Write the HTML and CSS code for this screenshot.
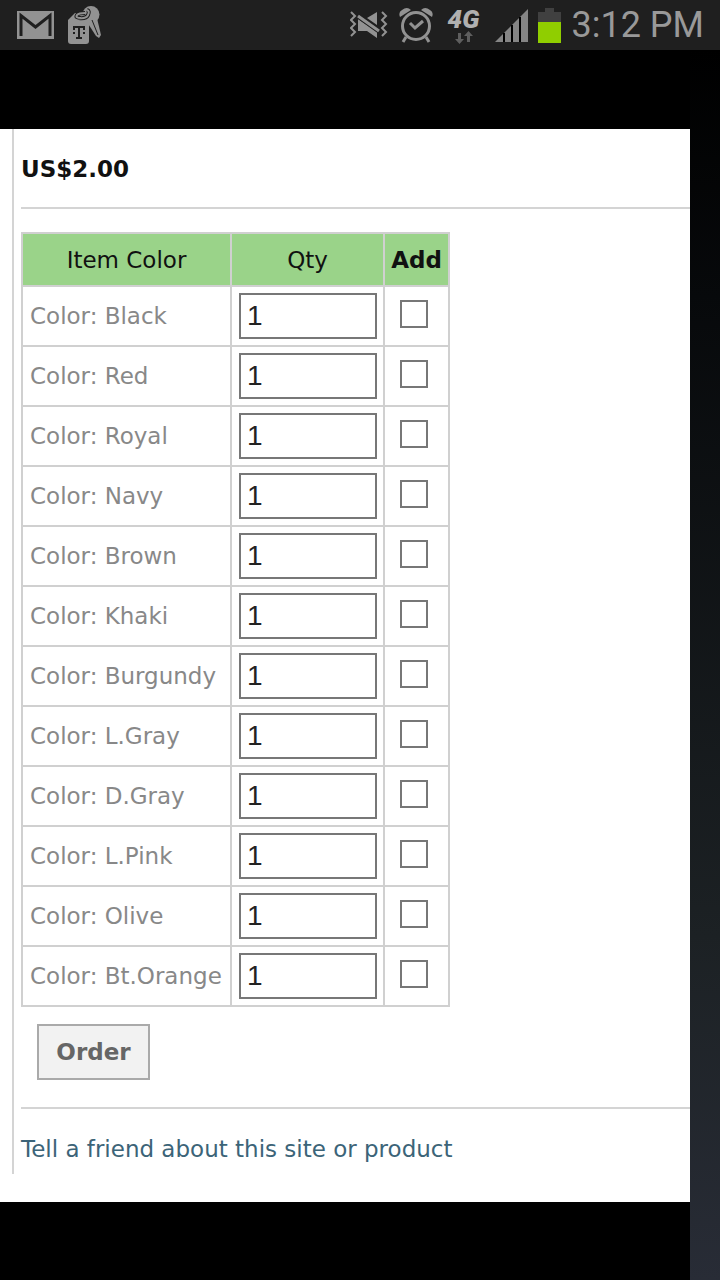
FILE: index.html
```html
<!DOCTYPE html>
<html lang="en">
<head>
  <meta charset="UTF-8">
  <meta name="viewport" content="width=device-width, initial-scale=1.0">
  <title>Order</title>
  <link rel="stylesheet" href="styles.css">
</head>
<body>
  <header class="status-bar">
    <div class="notifications">
      <svg width="38" height="28" viewBox="0 0 38 28">
        <rect x="1" y="0" width="37" height="28" fill="#929292"/>
        <path d="M5 25V4.500L19.500 16 34 4.500V25" fill="none" stroke="#1f1f1f" stroke-width="3"/>
      </svg>
      <svg width="34" height="38" viewBox="0 0 34 38">
        <path d="M17 13L28 8 33 29 31 32 28 30Z" fill="#929292"/>
        <circle cx="23" cy="8.500" r="8.500" fill="#929292"/>
        <path d="M24 14L30 29" stroke="#1f1f1f" stroke-width="1"/>
        <path d="M7 7H15L21 13V35Q21 38 18 38H3Q0 38 0 35V14Z" fill="#929292"/>
        <path d="M13 12Q7 12 9 9Q11 7 17 7M11 12Q18 13 20 9Q22 5 19 4" fill="none" stroke="#1f1f1f" stroke-width="4"/>
        <path d="M13 12Q7 12 9 9Q11 7 17 7M11 12Q18 13 20 9Q22 5 19 4" fill="none" stroke="#929292" stroke-width="2"/>
        <path d="M6 24V21H16V24M11 21V32M8 32H14M5 27H7M15 27H17" fill="none" stroke="#1f1f1f" stroke-width="2"/>
      </svg>
    </div>
    <div class="indicators">
      <!-- vibrate / muted -->
      <svg width="38" height="28" viewBox="0 0 38 28">
        <path d="M1 1L5 5 1 9 5 13 1 17 5 21 1 25M32 1L36 5 32 9 36 13 32 17 36 21 32 25" fill="none" stroke="#929292" stroke-width="2"/>
        <path d="M8 8L27 21V27L17 20H8ZM17 7L27 1V14Z" fill="#929292"/>
        <path d="M8 5L29 20" stroke="#1f1f1f" stroke-width="5"/>
        <path d="M8 5L29 20" stroke="#929292" stroke-width="3"/>
      </svg>
      <!-- alarm -->
      <svg class="alarm" width="34" height="36" viewBox="0 0 34 36">
        <circle cx="17" cy="19" r="13.500" fill="none" stroke="#929292" stroke-width="3"/>
        <path d="M1 10Q-1 5 3 3Q8 -1 12 3ZM33 10Q35 5 31 3Q26 -1 22 3Z" fill="#929292"/>
        <path d="M11 16L16 21 24 14" fill="none" stroke="#929292" stroke-width="3"/>
        <path d="M7 30L4 35M27 30L30 35" stroke="#929292" stroke-width="3"/>
      </svg>
      <div class="network">
        <span>4G</span>
        <svg width="18" height="13" viewBox="0 0 18 13">
          <path d="M3 2H6V8H9L4.500 13 0 8H3ZM12 11H15V5H18L13.500 0 9 5H12Z" fill="#5e5e5e"/>
        </svg>
      </div>
      <svg class="signal" width="33" height="33" viewBox="0 0 33 33">
        <path d="M0 33L33 0V33Z" fill="#858585"/>
        <path d="M9 24V33M17 16V33M25 8V33" stroke="#000" stroke-width="2"/>
      </svg>
      <svg width="23" height="35" viewBox="0 0 23 35">
        <path d="M7 0H16V4H23V14H0V4H7Z" fill="#404040"/>
        <rect y="14" width="23" height="21" fill="#90ce00"/>
      </svg>
      <time class="clock">3:12 PM</time>
    </div>
  </header>

  <div class="screen">
    <main class="page">
      <div class="product">
        <p class="price">US$2.00</p>
        <form class="order-form">
          <table class="colors">
            <thead>
              <tr><th class="col-color">Item Color</th><th class="col-qty">Qty</th><th class="col-add">Add</th></tr>
            </thead>
            <tbody>
              <tr><td>Color: Black</td><td><input type="text" value="1" aria-label="Quantity, Black"></td><td><input type="checkbox" aria-label="Add Black"></td></tr>
              <tr><td>Color: Red</td><td><input type="text" value="1" aria-label="Quantity, Red"></td><td><input type="checkbox" aria-label="Add Red"></td></tr>
              <tr><td>Color: Royal</td><td><input type="text" value="1" aria-label="Quantity, Royal"></td><td><input type="checkbox" aria-label="Add Royal"></td></tr>
              <tr><td>Color: Navy</td><td><input type="text" value="1" aria-label="Quantity, Navy"></td><td><input type="checkbox" aria-label="Add Navy"></td></tr>
              <tr><td>Color: Brown</td><td><input type="text" value="1" aria-label="Quantity, Brown"></td><td><input type="checkbox" aria-label="Add Brown"></td></tr>
              <tr><td>Color: Khaki</td><td><input type="text" value="1" aria-label="Quantity, Khaki"></td><td><input type="checkbox" aria-label="Add Khaki"></td></tr>
              <tr><td>Color: Burgundy</td><td><input type="text" value="1" aria-label="Quantity, Burgundy"></td><td><input type="checkbox" aria-label="Add Burgundy"></td></tr>
              <tr><td>Color: L.Gray</td><td><input type="text" value="1" aria-label="Quantity, L.Gray"></td><td><input type="checkbox" aria-label="Add L.Gray"></td></tr>
              <tr><td>Color: D.Gray</td><td><input type="text" value="1" aria-label="Quantity, D.Gray"></td><td><input type="checkbox" aria-label="Add D.Gray"></td></tr>
              <tr><td>Color: L.Pink</td><td><input type="text" value="1" aria-label="Quantity, L.Pink"></td><td><input type="checkbox" aria-label="Add L.Pink"></td></tr>
              <tr><td>Color: Olive</td><td><input type="text" value="1" aria-label="Quantity, Olive"></td><td><input type="checkbox" aria-label="Add Olive"></td></tr>
              <tr><td>Color: Bt.Orange</td><td><input type="text" value="1" aria-label="Quantity, Bt.Orange"></td><td><input type="checkbox" aria-label="Add Bt.Orange"></td></tr>
            </tbody>
          </table>
          <button type="button" class="order-btn">Order</button>
        </form>
        <a class="tell" href="#">Tell a friend about this site or product</a>
      </div>
    </main>
  </div>
</body>
</html>
```

FILE: styles.css
```css
* {
  box-sizing: border-box;
  margin: 0;
  padding: 0;
}
body {
  min-height: 100vh;
  display: flex;
  flex-direction: column;
  background: #000;
  font-family: Verdana, "DejaVu Sans", sans-serif;
  font-size: 23px;
}

/* phone status bar */
.status-bar {
  height: 50px;
  padding: 0 16px;
  display: flex;
  align-items: center;
  justify-content: space-between;
  background: #1f1f1f;
}
.notifications,
.indicators {
  display: flex;
  align-items: center;
}
.notifications {
  gap: 14px;
}
.alarm {
  margin: 0 15px 0 11px;
}
.network {
  width: 32px;
  display: flex;
  flex-direction: column;
  align-items: center;
  font: italic 900 26px/24px Roboto, sans-serif;
  color: #b0b0b0;
}
.signal {
  margin: 0 10px 0 15px;
}
.clock {
  margin-left: 11px;
  font: 36px/50px Roboto, sans-serif;
  color: #999;
}

/* the dark strip to the right is the phone's own wallpaper */
.screen {
  flex: 1;
  display: flex;
  padding-right: 30px;
  background: linear-gradient(#000 0%, #07090b 20%, #1c2124 72%, #282c36 100%);
}
.page {
  flex: 1;
  border: solid #000;
  border-width: 79px 0 78px;
  background: #fff;
  padding: 0 0 28px 12px;
}
.product {
  border-left: 2px solid #d4d4d4;
  padding-left: 7px;
}
.price {
  height: 80px;
  line-height: 80px;
  font-weight: bold;
  color: #111;
  border-bottom: 2px solid #d4d4d4;
}
.order-form {
  padding: 23px 0 27px;
  border-bottom: 2px solid #d4d4d4;
}
.colors {
  width: 429px;
  border-collapse: collapse;
  table-layout: fixed;
}
.colors th,
.colors td {
  border: 2px solid #d0d0d0;
}
.colors th {
  height: 53px;
  background: #9ad389;
  color: #111;
  font-weight: normal;
}
.colors .col-color {
  width: 209px;
}
.colors .col-qty {
  width: 153px;
}
.colors .col-add {
  font-weight: bold;
}
.colors td {
  height: 60px;
  padding-left: 7px;
  color: #888;
  white-space: nowrap;
}
.colors input {
  display: block;
  border: 2px solid #777;
  background: #fff;
}
.colors input[type="text"] {
  width: 138px;
  height: 46px;
  padding-left: 6px;
  font: 28px "Liberation Sans", Arial, sans-serif;
  color: #222;
}
.colors input[type="checkbox"] {
  appearance: none;
  width: 28px;
  height: 28px;
  margin: 0 0 4px 8px;
}
.order-btn {
  display: block;
  width: 113px;
  height: 56px;
  margin: 17px 0 0 16px;
  border: 2px solid #aaa;
  background: #f2f2f2;
  color: #666;
  font: bold 23px Verdana, "DejaVu Sans", sans-serif;
}
.tell {
  display: block;
  padding: 23px 0 8px;
  line-height: 34px;
  color: #3c6478;
  text-decoration: none;
}
```
